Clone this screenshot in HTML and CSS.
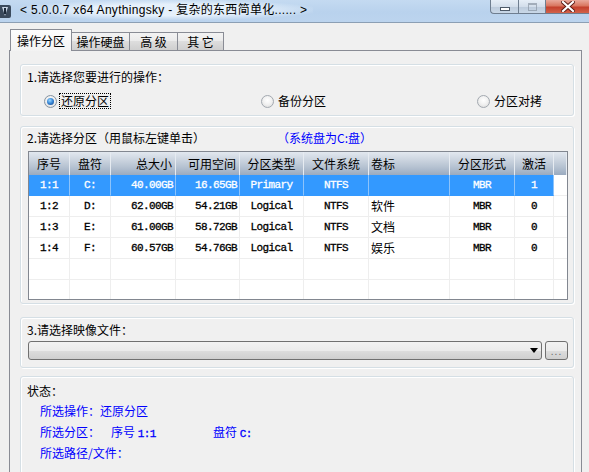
FILE: index.html
```html
<!DOCTYPE html>
<html lang="zh-CN">
<head>
<meta charset="utf-8">
<title>Anythingsky</title>
<link rel="stylesheet" href="styles.css">
</head>
<body>
<div class="titlebar">
  <svg class="app-icon" width="13" height="16" viewBox="0 0 13 16">
    <rect x="-3" y="2" width="14" height="13" rx="2" fill="#3b4a5c"/>
    <path d="M2 4 L8 4 L5 13 Z" fill="#c9d6e6"/>
    <rect x="4" y="5" width="2" height="6" fill="#1d2a3a"/>
  </svg>
  <div class="title">&lt; 5.0.0.7 x64 Anythingsky - 复杂的东西简单化...... &gt;</div>
  <div class="caption-btns">
    <div class="cbtn cbtn-min"><span class="glyph-min"></span></div>
    <div class="cbtn cbtn-max"><span class="glyph-max"></span></div>
    <div class="cbtn cbtn-close">
      <svg width="14" height="11" viewBox="0 0 14 11"><path d="M2 1 L12 10 M12 1 L2 10" stroke="#5a1a14" stroke-width="4" stroke-linecap="square"/><path d="M2 1 L12 10 M12 1 L2 10" stroke="#ffffff" stroke-width="2.2" stroke-linecap="square"/></svg>
    </div>
  </div>
</div>

<div class="client">
  <div class="tabs">
    <div class="tab tab-active">操作分区</div>
    <div class="tab tab-w58">操作硬盘</div>
    <div class="tab tab-w48">高 级</div>
    <div class="tab tab-w46">其 它</div>
  </div>

  <div class="panel">
    <div class="group group-op">
      <div class="gtitle">1.请选择您要进行的操作：</div>
      <div class="radios">
        <div class="radio radio-1"><span class="rdot rdot-on"></span><span class="rlabel focus">还原分区</span></div>
        <div class="radio radio-2"><span class="rdot"></span><span class="rlabel">备份分区</span></div>
        <div class="radio radio-3"><span class="rdot"></span><span class="rlabel">分区对拷</span></div>
      </div>
    </div>

    <div class="group group-part">
      <div class="gtitle gtitle-split"><span class="gt-main">2.请选择分区（用鼠标左键单击）</span><span class="gt-blue">（系统盘为C:盘）</span></div>
      <div class="listview">
        <div class="lv-row lv-head">
          <div class="c c-center">序号</div>
          <div class="c c-center">盘符</div>
          <div class="c c-right">总大小</div>
          <div class="c c-right">可用空间</div>
          <div class="c c-center">分区类型</div>
          <div class="c c-center">文件系统</div>
          <div class="c c-left">卷标</div>
          <div class="c c-center">分区形式</div>
          <div class="c c-center">激活</div>
          <div class="c c-fill"></div>
        </div>
        <div class="lv-row lv-sel">
          <div class="c c-center m">1:1</div>
          <div class="c c-center m">C:</div>
          <div class="c c-right m">40.00GB</div>
          <div class="c c-right m">16.65GB</div>
          <div class="c c-center m">Primary</div>
          <div class="c c-center m">NTFS</div>
          <div class="c c-left"></div>
          <div class="c c-center m">MBR</div>
          <div class="c c-center m">1</div>
          <div class="c c-fill"></div>
        </div>
        <div class="lv-row">
          <div class="c c-center m">1:2</div>
          <div class="c c-center m">D:</div>
          <div class="c c-right m">62.00GB</div>
          <div class="c c-right m">54.21GB</div>
          <div class="c c-center m">Logical</div>
          <div class="c c-center m">NTFS</div>
          <div class="c c-left">软件</div>
          <div class="c c-center m">MBR</div>
          <div class="c c-center m">0</div>
          <div class="c c-fill"></div>
        </div>
        <div class="lv-row">
          <div class="c c-center m">1:3</div>
          <div class="c c-center m">E:</div>
          <div class="c c-right m">61.00GB</div>
          <div class="c c-right m">58.72GB</div>
          <div class="c c-center m">Logical</div>
          <div class="c c-center m">NTFS</div>
          <div class="c c-left">文档</div>
          <div class="c c-center m">MBR</div>
          <div class="c c-center m">0</div>
          <div class="c c-fill"></div>
        </div>
        <div class="lv-row">
          <div class="c c-center m">1:4</div>
          <div class="c c-center m">F:</div>
          <div class="c c-right m">60.57GB</div>
          <div class="c c-right m">54.76GB</div>
          <div class="c c-center m">Logical</div>
          <div class="c c-center m">NTFS</div>
          <div class="c c-left">娱乐</div>
          <div class="c c-center m">MBR</div>
          <div class="c c-center m">0</div>
          <div class="c c-fill"></div>
        </div>
        <div class="lv-row">
          <div class="c"></div><div class="c"></div><div class="c"></div><div class="c"></div><div class="c"></div>
          <div class="c"></div><div class="c"></div><div class="c"></div><div class="c"></div><div class="c c-fill"></div>
        </div>
        <div class="lv-row">
          <div class="c"></div><div class="c"></div><div class="c"></div><div class="c"></div><div class="c"></div>
          <div class="c"></div><div class="c"></div><div class="c"></div><div class="c"></div><div class="c c-fill"></div>
        </div>
      </div>
    </div>

    <div class="group group-file">
      <div class="gtitle">3.请选择映像文件：</div>
      <div class="file-row">
        <div class="combo"><span class="combo-arrow"></span></div>
        <div class="browse">...</div>
      </div>
    </div>

    <div class="group group-status">
      <div class="gtitle">状态：</div>
      <div class="status-lines">
        <div class="sline">所选操作：还原分区</div>
        <div class="sline"><span class="s-lbl">所选分区：</span><span class="s-seq">序号 <span class="m">1:1</span></span><span>盘符 <span class="m">C:</span></span></div>
        <div class="sline">所选路径/文件：</div>
      </div>
    </div>
  </div>
</div>
</body>
</html>
```

FILE: styles.css
```css
* { box-sizing: border-box; }
html, body { margin: 0; padding: 0; }
body {
  width: 589px;
  height: 472px;
  overflow: hidden;
  background: #f0f0f0;
  font-family: "Noto Sans CJK SC", "Noto Sans", sans-serif;
  font-size: 12px;
  color: #000;
}

/* ---------- title bar ---------- */
.titlebar {
  height: 23px;
  display: flex;
  align-items: flex-start;
  background: linear-gradient(to bottom, #c4daf1 0%, #b9d2ed 55%, #bcd4ee 100%);
  border-bottom: 1px solid #8c9fb4;
}
.app-icon { margin-top: 3px; flex: none; }
.title {
  margin-left: 7px;
  height: 20px;
  line-height: 20px;
  padding: 0 6px 0 0;
  font-family: "Liberation Sans", "Noto Sans CJK SC", sans-serif;
  font-size: 12px;
  letter-spacing: 0.3px;
  white-space: nowrap;
  background: radial-gradient(ellipse at 50% 50%, rgba(232,242,252,0.95) 40%, rgba(232,242,252,0) 75%);
}
.caption-btns {
  margin-left: auto;
  display: flex;
  height: 14px;
}
.cbtn {
  height: 14px;
  display: flex;
  align-items: center;
  justify-content: center;
  border: 1px solid #6f7e90;
  border-top: none;
}
.cbtn-min {
  width: 28px;
  border-bottom-left-radius: 4px;
  border-right: none;
  background: linear-gradient(to bottom, #e6eef7 0%, #d3deeb 50%, #bccadb 51%, #c9d8e8 100%);
}
.cbtn-max {
  width: 27px;
  border-right: none;
  background: linear-gradient(to bottom, #e6eef7 0%, #d3deeb 50%, #bccadb 51%, #c9d8e8 100%);
}
.cbtn-close {
  width: 44px;
  border-right: none;
  background: linear-gradient(to bottom, #e9a99c 0%, #d9765f 45%, #c4402c 55%, #d2624a 100%);
}
.glyph-min {
  width: 10px;
  height: 4px;
  margin-top: 5px;
  border: 1px solid #4c5968;
  background: #fff;
}
.glyph-max {
  width: 9px;
  height: 8px;
  border: 1px solid #8a96a4;
  border-top-width: 2px;
  background: transparent;
  opacity: 0.7;
}

/* ---------- tabs ---------- */
.client { padding-top: 6px; }
.tabs {
  display: flex;
  align-items: flex-end;
  height: 21px;
  margin-left: 10px;
  position: relative;
  z-index: 1;
}
.tab {
  height: 18px;
  line-height: 17px;
  text-align: center;
  border: 1px solid #898c95;
  border-left: none;
  border-bottom: none;
  background: linear-gradient(to bottom, #f3f3f3 0%, #ebebeb 45%, #dddddd 50%, #cfcfcf 100%);
  white-space: nowrap;
}
.tab-active {
  width: 62px;
  height: 22px;
  line-height: 21px;
  margin-bottom: -1px;
  border-left: 1px solid #898c95;
  background: linear-gradient(to bottom, #fdfdfd, #f2f2f2);
}
.tab-w58 { width: 58px; }
.tab-w48 { width: 48px; }
.tab-w46 { width: 46px; }

.panel {
  margin-left: 9px;
  width: 573px;
  height: 422px;
  border: 1px solid #898c95;
  border-bottom: none;
  background: #f0f0f0;
  padding: 0 7px 0 10px;
}

/* ---------- group boxes ---------- */
.group {
  border: 1px solid #d5dfe5;
  border-radius: 3px;
  box-shadow: inset 1px 1px 0 #ffffff, 1px 1px 0 #ffffff;
  padding-left: 6px;
}
.gtitle {
  height: 14px;
  line-height: 14px;
  white-space: nowrap;
}
.group-op {
  margin-top: 13px;
  height: 52px;
  padding-top: 5px;
}
.radios {
  display: flex;
  margin-top: 9px;
  height: 16px;
  padding-left: 17px;
}
.radio {
  display: flex;
  align-items: center;
  height: 16px;
}
.radio-1 { width: 217px; }
.radio-2 { width: 216px; }
.rdot {
  width: 13px;
  height: 13px;
  border-radius: 50%;
  border: 1px solid #a3a9b0;
  background: radial-gradient(circle at 50% 40%, #ffffff 0%, #f2f2f2 45%, #d8d8d8 100%);
  display: flex;
  align-items: center;
  justify-content: center;
  flex: none;
}
.rdot-on { border-color: #8693a0; }
.rdot-on::after {
  content: "";
  width: 7px;
  height: 7px;
  border-radius: 50%;
  background: radial-gradient(circle at 40% 35%, #9ad8ff 0%, #3c8ad8 45%, #103e80 100%);
}
.rlabel {
  margin-left: 2px;
  height: 16px;
  line-height: 14px;
  padding: 0 1px;
  border: 1px solid transparent;
}
.focus { border: 1px dotted #000; }

/* ---------- partition list ---------- */
.group-part {
  margin-top: 10px;
  height: 178px;
  padding-top: 4px;
}
.gtitle-split { display: flex; }
.gt-main { width: 250px; }
.gt-blue { color: #0000ff; }
.listview {
  margin-top: 6px;
  margin-left: 1px;
  width: 540px;
  height: 149px;
  border: 1px solid #828790;
  background: #fff;
  overflow: hidden;
}
.lv-row {
  display: grid;
  grid-template-columns: 41px 41px 65px 64px 64px 65px 81px 65px 39px 13px;
  height: 21px;
}
.lv-head {
  height: 23px;
  background: linear-gradient(to bottom, #e2e8ef 0%, #cbd4df 35%, #b2bfcf 70%, #9aaabf 100%);
}
.c {
  border-right: 1px solid #eeeeee;
  border-bottom: 1px solid #eeeeee;
  line-height: 20px;
  white-space: nowrap;
  overflow: hidden;
}
.lv-head .c {
  border-right: 1px solid #e6ebf1;
  border-bottom: none;
  line-height: 23px;
  color: #000;
}
.c-center { text-align: center; }
.c-right { text-align: right; padding-right: 2px; }
.lv-head .c-right { padding-right: 3px; }
.c-left { text-align: left; padding-left: 2px; }
.c-fill { border-right: none; }
.lv-sel .c { background: #3399ff; color: #fff; border-right-color: #8cc3fb; border-bottom-color: #3399ff; }
.lv-sel .c-fill { background: #fff; border-bottom-color: #eeeeee; }
.m {
  font-family: "Liberation Mono", "DejaVu Sans Mono", monospace;
  font-size: 11px;
  letter-spacing: -0.6px;
  -webkit-text-stroke: 0.3px currentColor;
}

/* ---------- image file ---------- */
.group-file {
  margin-top: 13px;
  height: 51px;
  padding-top: 5px;
}
.file-row {
  display: flex;
  margin-top: 4px;
  margin-left: 1px;
  gap: 3px;
}
.combo {
  width: 514px;
  height: 19px;
  border: 1px solid #707070;
  border-radius: 3px;
  background: linear-gradient(to bottom, #f2f2f2 0%, #ebebeb 50%, #dddddd 51%, #cfcfcf 100%);
  display: flex;
  align-items: center;
  justify-content: flex-end;
  padding-right: 3px;
}
.combo-arrow {
  width: 0;
  height: 0;
  border-left: 4px solid transparent;
  border-right: 4px solid transparent;
  border-top: 5px solid #000;
}
.browse {
  width: 23px;
  height: 19px;
  border: 1px solid #707070;
  border-radius: 3px;
  background: linear-gradient(to bottom, #f2f2f2 0%, #ebebeb 50%, #dddddd 51%, #cfcfcf 100%);
  font-family: "Liberation Sans", sans-serif;
  font-size: 10px;
  line-height: 20px;
  text-align: center;
  color: #666;
  letter-spacing: 1px;
}

/* ---------- status ---------- */
.group-status {
  margin-top: 8px;
  height: 100px;
  padding-top: 7px;
}
.status-lines {
  margin-top: 2px;
  padding-left: 13px;
  color: #0000ff;
}
.sline {
  height: 21px;
  line-height: 21px;
  white-space: nowrap;
}
.s-lbl { display: inline-block; width: 71px; }
.s-seq { display: inline-block; width: 102px; }
```
